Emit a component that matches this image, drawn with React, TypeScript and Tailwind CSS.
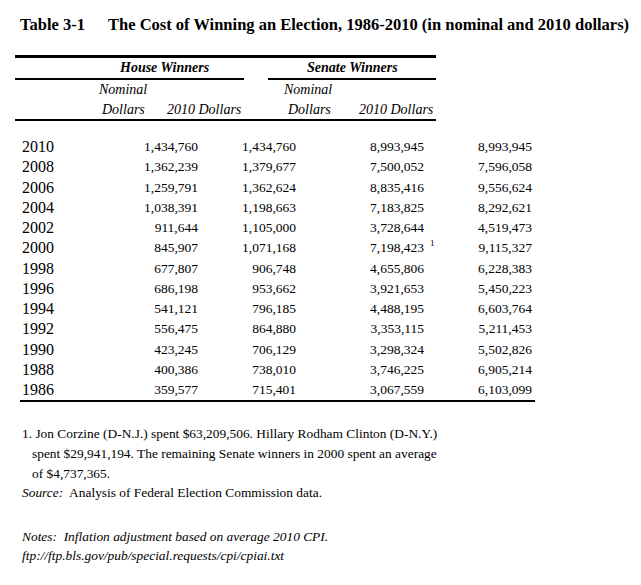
import React from "react";

const rows: [string, string, string, string, string][] = [
  ["2010", "1,434,760", "1,434,760", "8,993,945", "8,993,945"],
  ["2008", "1,362,239", "1,379,677", "7,500,052", "7,596,058"],
  ["2006", "1,259,791", "1,362,624", "8,835,416", "9,556,624"],
  ["2004", "1,038,391", "1,198,663", "7,183,825", "8,292,621"],
  ["2002", "911,644", "1,105,000", "3,728,644", "4,519,473"],
  ["2000", "845,907", "1,071,168", "7,198,423", "9,115,327"],
  ["1998", "677,807", "906,748", "4,655,806", "6,228,383"],
  ["1996", "686,198", "953,662", "3,921,653", "5,450,223"],
  ["1994", "541,121", "796,185", "4,488,195", "6,603,764"],
  ["1992", "556,475", "864,880", "3,353,115", "5,211,453"],
  ["1990", "423,245", "706,129", "3,298,324", "5,502,826"],
  ["1988", "400,386", "738,010", "3,746,225", "6,905,214"],
  ["1986", "359,577", "715,401", "3,067,559", "6,103,099"],
];

export default function App() {
  return (
    <div className="w-[641px] h-[585px] bg-white text-black font-['Liberation_Serif',serif]">
      <div className="pt-[15px] pl-[20px] flex text-[16.5px] leading-[20px] font-bold whitespace-nowrap">
        <span className="w-[88px]">Table 3-1</span>
        <span>The Cost of Winning an Election, 1986-2010 (in nominal and 2010 dollars)</span>
      </div>

      <div className="mt-[20px] ml-[15px] w-[421px]">
        <div className="h-[3px] bg-black" />
        <div className="flex text-[14px] font-bold italic">
          <div className="w-[229px] h-[22px] border-b-2 border-black pl-[105px] leading-[20px]">House Winners</div>
          <div className="w-[24px]" />
          <div className="w-[168px] h-[22px] border-b-2 border-black pl-[39px] leading-[20px]">Senate Winners</div>
        </div>
        <div className="flex italic text-[14px] leading-[20px] h-[20px]">
          <span className="pl-[84px] w-[253px]">Nominal</span>
          <span className="pl-[16px]">Nominal</span>
        </div>
        <div className="flex italic text-[14px] leading-[19px] h-[21px] border-b-2 border-black">
          <span className="pl-[87px] w-[152px]">Dollars</span>
          <span className="w-[121px]">2010 Dollars</span>
          <span className="w-[71px]">Dollars</span>
          <span>2010 Dollars</span>
        </div>
      </div>

      <div className="mt-[16px] w-[535px]">
        {rows.map((r) => (
          <div key={r[0]} className="flex items-center h-[20.27px] leading-[20.27px] pl-[22px]">
            <span className="w-[40px] text-[16px]">{r[0]}</span>
            <span className="w-[136px] text-right text-[13.5px]">{r[1]}</span>
            <span className="w-[98px] text-right text-[13.5px]">{r[2]}</span>
            <span className="relative w-[128px] text-right text-[13.5px]">
              {r[3]}
              {r[0] === "2000" && (
                <span className="absolute left-[calc(100%+6px)] top-[-5px] text-[9px]">1</span>
              )}
            </span>
            <span className="w-[108px] text-right text-[13.5px]">{r[4]}</span>
          </div>
        ))}
        <div className="ml-[20px] h-[2px] bg-black" />
      </div>

      <div className="mt-[22px] pl-[22px] text-[13.4px] leading-[20px] whitespace-nowrap">
        <div>1. Jon Corzine (D-N.J.) spent $63,209,506. Hillary Rodham Clinton (D-N.Y.)</div>
        <div className="pl-[10px]">spent $29,941,194. The remaining Senate winners in 2000 spent an average</div>
        <div className="pl-[10px]">of $4,737,365.</div>
        <div className="leading-[17px]">
          <span className="italic">Source:</span>&nbsp; Analysis of Federal Election Commission data.
        </div>
        <div className="mt-[27px] italic text-[13.4px] leading-[18.4px]">
          <div>Notes:&nbsp; Inflation adjustment based on average 2010 CPI.</div>
          <div>ftp://ftp.bls.gov/pub/special.requests/cpi/cpiai.txt</div>
        </div>
      </div>
    </div>
  );
}
